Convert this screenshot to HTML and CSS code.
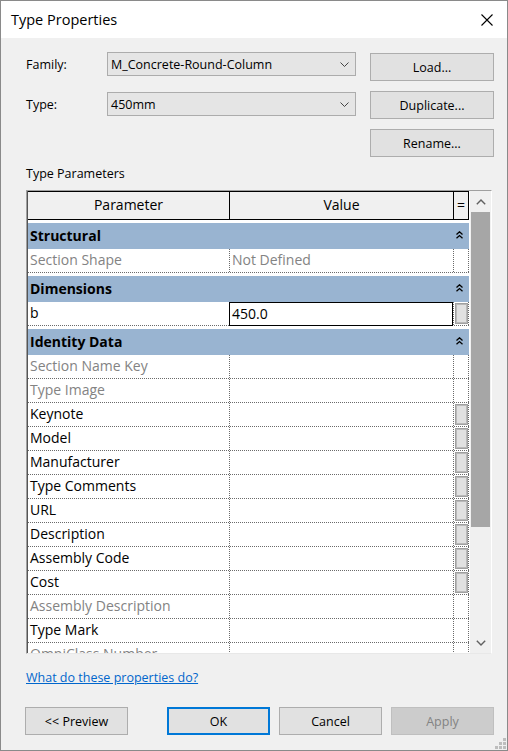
FILE: index.html
```html
<!DOCTYPE html>
<html>
<head>
<meta charset="utf-8">
<title>Type Properties</title>
<link rel="stylesheet" href="styles.css">
</head>
<body>
<div class="window">
  <div class="titlebar">
    <span class="title">Type Properties</span>
    <svg class="close" width="12" height="12" viewBox="0 0 12 12"><path d="M0.5 0.5 L11.5 11.5 M11.5 0.5 L0.5 11.5" stroke="#000" stroke-width="1.1" fill="none"/></svg>
  </div>
  <div class="content">
    <div class="top">
      <div class="fields">
        <div class="field">
          <span class="label">Family:</span>
          <div class="combo"><span>M_Concrete-Round-Column</span><svg class="chev" width="9" height="5" viewBox="0 0 9 5"><path d="M0.5 0.5 L4.5 4.5 L8.5 0.5" stroke="#444" stroke-width="1" fill="none"/></svg></div>
        </div>
        <div class="field">
          <span class="label">Type:</span>
          <div class="combo"><span>450mm</span><svg class="chev" width="9" height="5" viewBox="0 0 9 5"><path d="M0.5 0.5 L4.5 4.5 L8.5 0.5" stroke="#444" stroke-width="1" fill="none"/></svg></div>
        </div>
      </div>
      <div class="side-buttons">
        <div class="btn">Load...</div>
        <div class="btn">Duplicate...</div>
        <div class="btn">Rename...</div>
      </div>
    </div>
    <div class="section-label">Type Parameters</div>
    <div class="frame">
      <div class="grid">
        <div class="row head"><div class="c1">Parameter</div><div class="c2">Value</div><div class="c3">=</div></div>

        <div class="group"><div class="bar"><span>Structural</span><svg class="collapse" width="7" height="8" viewBox="0 0 7 8"><path d="M0.5 3.5 L3.5 0.8 L6.5 3.5 M0.5 7.3 L3.5 4.6 L6.5 7.3" stroke="#000" stroke-width="1.3" fill="none"/></svg></div></div>
        <div class="row ro"><div class="c1">Section Shape</div><div class="c2">Not Defined</div><div class="c3"></div></div>

        <div class="group"><div class="bar"><span>Dimensions</span><svg class="collapse" width="7" height="8" viewBox="0 0 7 8"><path d="M0.5 3.5 L3.5 0.8 L6.5 3.5 M0.5 7.3 L3.5 4.6 L6.5 7.3" stroke="#000" stroke-width="1.3" fill="none"/></svg></div></div>
        <div class="row"><div class="c1">b</div><div class="c2 editing"><div class="edit">450.0</div></div><div class="c3"><div class="cellbtn"></div></div></div>

        <div class="group"><div class="bar"><span>Identity Data</span><svg class="collapse" width="7" height="8" viewBox="0 0 7 8"><path d="M0.5 3.5 L3.5 0.8 L6.5 3.5 M0.5 7.3 L3.5 4.6 L6.5 7.3" stroke="#000" stroke-width="1.3" fill="none"/></svg></div></div>
        <div class="row ro"><div class="c1">Section Name Key</div><div class="c2"></div><div class="c3"></div></div>
        <div class="row ro"><div class="c1">Type Image</div><div class="c2"></div><div class="c3"></div></div>
        <div class="row"><div class="c1">Keynote</div><div class="c2"></div><div class="c3"><div class="cellbtn"></div></div></div>
        <div class="row"><div class="c1">Model</div><div class="c2"></div><div class="c3"><div class="cellbtn"></div></div></div>
        <div class="row"><div class="c1">Manufacturer</div><div class="c2"></div><div class="c3"><div class="cellbtn"></div></div></div>
        <div class="row"><div class="c1">Type Comments</div><div class="c2"></div><div class="c3"><div class="cellbtn"></div></div></div>
        <div class="row"><div class="c1">URL</div><div class="c2"></div><div class="c3"><div class="cellbtn"></div></div></div>
        <div class="row"><div class="c1">Description</div><div class="c2"></div><div class="c3"><div class="cellbtn"></div></div></div>
        <div class="row"><div class="c1">Assembly Code</div><div class="c2"></div><div class="c3"><div class="cellbtn"></div></div></div>
        <div class="row"><div class="c1">Cost</div><div class="c2"></div><div class="c3"><div class="cellbtn"></div></div></div>
        <div class="row ro"><div class="c1">Assembly Description</div><div class="c2"></div><div class="c3"></div></div>
        <div class="row"><div class="c1">Type Mark</div><div class="c2"></div><div class="c3"></div></div>
        <div class="row ro"><div class="c1">OmniClass Number</div><div class="c2"></div><div class="c3"></div></div>
      </div>
      <div class="scrollbar">
        <div class="arrow"><svg width="10" height="6" viewBox="0 0 10 6"><path d="M0.8 5.2 L5 1 L9.2 5.2" stroke="#606060" stroke-width="1.4" fill="none"/></svg></div>
        <div class="thumb"></div>
        <div class="track"></div>
        <div class="arrow"><svg width="10" height="6" viewBox="0 0 10 6"><path d="M0.8 0.8 L5 5 L9.2 0.8" stroke="#606060" stroke-width="1.4" fill="none"/></svg></div>
      </div>
    </div>
    <div class="help-line"><a class="help" href="#">What do these properties do?</a></div>
    <div class="footer">
      <div class="btn preview">&lt;&lt; Preview</div>
      <div class="btn ok">OK</div>
      <div class="btn cancel">Cancel</div>
      <div class="btn apply">Apply</div>
    </div>
  </div>
  <svg class="grip" width="12" height="12" viewBox="0 0 12 12">
    <rect x="9" y="1" width="3" height="3" fill="#bdbdbd"/>
    <rect x="5" y="5" width="3" height="3" fill="#bdbdbd"/>
    <rect x="9" y="5" width="3" height="3" fill="#bdbdbd"/>
    <rect x="1" y="9" width="3" height="3" fill="#bdbdbd"/>
    <rect x="5" y="9" width="3" height="3" fill="#bdbdbd"/>
    <rect x="9" y="9" width="3" height="3" fill="#bdbdbd"/>
  </svg>
</div>
</body>
</html>
```
FILE: styles.css
```css
* { box-sizing: border-box; }
html, body { margin: 0; padding: 0; }
body {
  width: 508px;
  height: 751px;
  overflow: hidden;
  font-family: "Open Sans", "Noto Sans", sans-serif;
  color: #000;
}
.window {
  position: relative;
  width: 508px;
  height: 751px;
  border: 1px solid #8a8a8a;
  background: #f0f0f0;
}
.titlebar {
  height: 37px;
  background: #fff;
  display: flex;
  align-items: center;
  padding: 0 14px 0 10px;
}
.title {
  font-size: 14.5px;
  flex: 1;
}
.close { display: block; }

.content {
  padding: 0 13px 0 25px;
}
.top {
  display: flex;
  gap: 14px;
}
.fields {
  padding-top: 14px;
  display: flex;
  flex-direction: column;
  gap: 16px;
}
.field {
  display: flex;
  align-items: center;
  height: 24px;
}
.label {
  width: 81px;
  font-size: 12.5px;
}
.combo {
  width: 249px;
  height: 24px;
  border: 1px solid #acacac;
  background: #e5e5e5;
  display: flex;
  align-items: center;
  justify-content: space-between;
  padding: 0 6px 0 3px;
  font-size: 12.5px;
}
.chev { display: block; }
.side-buttons {
  padding-top: 15px;
  display: flex;
  flex-direction: column;
  gap: 10px;
}
.btn {
  width: 124px;
  height: 28px;
  border: 1px solid #adadad;
  background: #e1e1e1;
  display: flex;
  align-items: center;
  justify-content: center;
  font-size: 12.5px;
}

.section-label {
  margin-top: 9px;
  line-height: 16px;
  font-size: 12.5px;
}
.frame {
  margin-top: 8px;
  width: 466px;
  height: 464px;
  border-top: 1px solid #a0a0a0;
  border-left: 1px solid #a0a0a0;
  border-right: 1px solid #ffffff;
  border-bottom: 1px solid #e8e8e8;
  display: flex;
}
.grid {
  width: 442px;
  height: 462px;
  overflow: hidden;
  background: #fff;
  border-left: 1px solid #555;
  font-size: 14px;
}
.row {
  display: flex;
  height: 24px;
  border-bottom: 1px dotted #6a6a6a;
  line-height: 22px;
}
.row > div {
  height: 100%;
  border-right: 1px dotted #6a6a6a;
  white-space: nowrap;
  overflow: hidden;
}
.c1 { width: 202px; padding-left: 2px; }
.c2 { width: 224px; padding-left: 2px; }
.c3 { width: 15px; }
.row.ro { color: #838383; }

.row.head {
  height: 29px;
  line-height: 26px;
  border-top: 1px solid #000;
  border-bottom: 1px solid #000;
  background: #f0f0f0;
}
.row.head > div {
  border-right: 1px solid #000;
  text-align: center;
  padding-left: 0;
}

.group {
  padding-top: 3px;
  background: #fff;
}
.group .bar {
  height: 26px;
  background: #99b4d1;
  display: flex;
  align-items: center;
  justify-content: space-between;
  padding: 0 6px 2px 2px;
  font-weight: bold;
}
.collapse { display: block; margin-top: -1px; }

.c2.editing {
  position: relative;
  overflow: visible;
}
.edit {
  position: absolute;
  left: -1px;
  top: 0;
  width: 224px;
  height: 24px;
  border: 1px solid #000;
  background: #fff;
  padding-left: 2px;
  line-height: 21px;
  color: #000;
}
.cellbtn {
  margin: 1px 0 0 1px;
  width: 13px;
  height: 21px;
  background: #e1e1e1;
  border: 1px solid #a0a0a0;
  box-shadow: inset 0 0 0 1px #b9b9b9;
}

.scrollbar {
  width: 22px;
  height: 462px;
  border-left: 1px solid #fff;
  background: #f0f0f0;
  display: flex;
  flex-direction: column;
}
.arrow {
  height: 21px;
  display: flex;
  align-items: center;
  justify-content: center;
}
.arrow svg { display: block; }
.thumb {
  margin-left: 1px;
  width: 19px;
  height: 315px;
  background: #a6a6a6;
}
.track { flex: 1; }

.help-line {
  margin-top: 13px;
  line-height: 18px;
  height: 18px;
}
.help {
  font-size: 12.5px;
  color: #0066cc;
  text-decoration: underline;
}
.footer {
  display: flex;
  margin-top: 22px;
  margin-left: -1px;
}
.footer .btn {
  width: 103px;
}
.footer .ok {
  margin-left: 39px;
  border: 2px solid #0078d7;
}
.footer .cancel { margin-left: 9px; }
.footer .apply {
  margin-left: 9px;
  background: #cccccc;
  border-color: #bfbfbf;
  color: #838383;
}
.grip {
  position: absolute;
  right: 1px;
  bottom: 1px;
}
```
